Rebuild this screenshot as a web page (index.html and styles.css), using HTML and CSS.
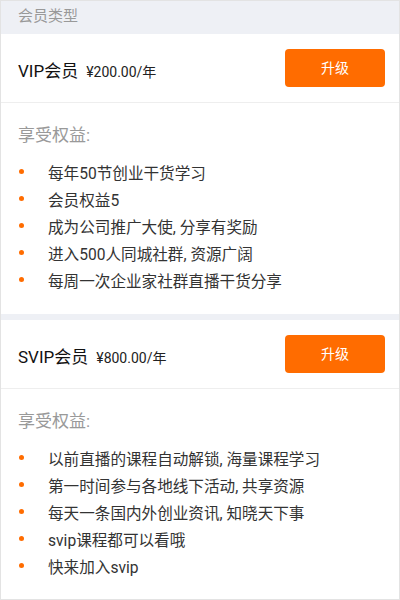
FILE: index.html
```html
<!DOCTYPE html>
<html lang="zh">
<head>
<meta charset="utf-8">
<link rel="stylesheet" href="styles.css">
</head>
<body>
<div class="page">
  <div class="section-head">会员类型</div>

  <div class="card">
    <div class="plan-row">
      <div class="plan-name">VIP会员<span class="plan-price">¥200.00/年</span></div>
      <div class="btn">升级</div>
    </div>
    <div class="benefits">
      <div class="benefits-title">享受权益:</div>
      <ul class="list">
        <li><span class="dot"></span>每年50节创业干货学习</li>
        <li><span class="dot"></span>会员权益5</li>
        <li><span class="dot"></span>成为公司推广大使, 分享有奖励</li>
        <li><span class="dot"></span>进入500人同城社群, 资源广阔</li>
        <li><span class="dot"></span>每周一次企业家社群直播干货分享</li>
      </ul>
    </div>
  </div>

  <div class="card card-second">
    <div class="plan-row">
      <div class="plan-name">SVIP会员<span class="plan-price">¥800.00/年</span></div>
      <div class="btn">升级</div>
    </div>
    <div class="benefits">
      <div class="benefits-title">享受权益:</div>
      <ul class="list">
        <li><span class="dot"></span>以前直播的课程自动解锁, 海量课程学习</li>
        <li><span class="dot"></span>第一时间参与各地线下活动, 共享资源</li>
        <li><span class="dot"></span>每天一条国内外创业资讯, 知晓天下事</li>
        <li><span class="dot"></span>svip课程都可以看哦</li>
        <li><span class="dot"></span>快来加入svip</li>
      </ul>
    </div>
  </div>
</div>
</body>
</html>
```

FILE: styles.css
```css
html, body {
  margin: 0;
  padding: 0;
  background: #ffffff;
}
.page {
  width: 400px;
  height: 600px;
  box-sizing: border-box;
  border: 1px solid #e3e3e3;
  background: #eef0f5;
  overflow: hidden;
  font-family: Roboto, "Noto Sans CJK SC", sans-serif;
  color: #333333;
}
.section-head {
  height: 33px;
  line-height: 30px;
  padding-left: 17px;
  font-size: 15px;
  color: #999999;
}
.card {
  background: #ffffff;
}
.card-second {
  margin-top: 6px;
}
.plan-row {
  display: flex;
  align-items: center;
  justify-content: space-between;
  padding: 15px 14px 15px 17px;
  border-bottom: 1px solid #eeeeee;
}
.plan-name {
  font-size: 17px;
  color: #111111;
  padding-top: 3px;
}
.plan-price {
  font-size: 14px;
  margin-left: 8px;
  color: #222222;
}
.btn {
  width: 100px;
  height: 38px;
  line-height: 38px;
  border-radius: 4px;
  background: #ff6c00;
  color: #ffffff;
  text-align: center;
  font-size: 14px;
}
.benefits {
  padding: 17px 0 21px 17px;
}
.benefits-title {
  font-size: 17px;
  line-height: 30px;
  color: #999999;
}
.list {
  list-style: none;
  margin: 8px 0 0 0;
  padding: 0;
}
.list li {
  display: flex;
  align-items: center;
  height: 27px;
  font-size: 15.6px;
  color: #333333;
}
.dot {
  width: 5px;
  height: 5px;
  border-radius: 50%;
  background: #ff6c00;
  margin-right: 24px;
  margin-left: 1px;
}
```
